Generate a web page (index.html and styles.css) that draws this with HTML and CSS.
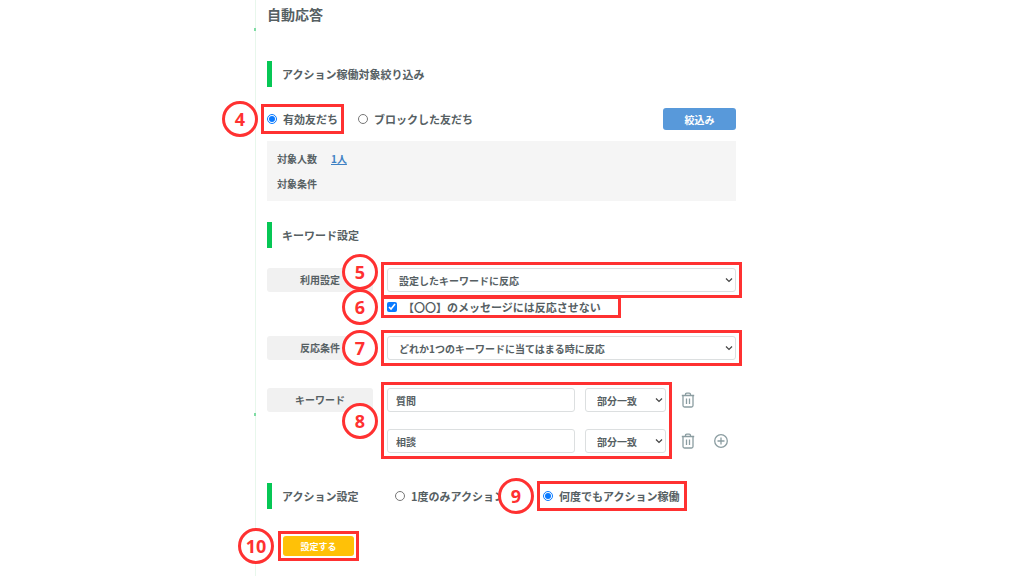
FILE: index.html
```html
<!DOCTYPE html>
<html lang="ja">

<head>
  <meta charset="UTF-8">
  <meta name="viewport" content="width=device-width, initial-scale=1.0">
  <title>自動応答</title>
  <link rel="stylesheet" href="styles.css">
</head>

<body>
  <main class="container">
    <h1 class="title">自動応答</h1>

    <form>
      <h2 class="section-title">アクション稼働対象絞り込み</h2>

      <div class="target-row">
        <div class="mark">
          <span class="badge">4</span>
          <label class="choice"><input type="radio" name="target" value="active" checked>有効友だち</label>
        </div>
        <label class="choice"><input type="radio" name="target" value="blocked">ブロックした友だち</label>
        <button type="button" class="button button-filter">絞込み</button>
      </div>

      <dl class="summary">
        <dt>対象人数</dt>
        <dd><a href="#">1人</a></dd>
        <dt>対象条件</dt>
        <dd></dd>
      </dl>

      <h2 class="section-title">キーワード設定</h2>

      <div class="row">
        <label for="usage" class="tag">利用設定</label>
        <div>
          <div class="mark">
            <span class="badge badge-high">5</span>
            <select id="usage" name="usage" class="input select">
              <option>設定したキーワードに反応</option>
            </select>
          </div>
          <div class="mark mark-check">
            <span class="badge">6</span>
            <label class="choice"><input type="checkbox" name="exclude" checked>【〇〇】のメッセージには反応させない</label>
          </div>
        </div>
      </div>

      <div class="row">
        <label for="condition" class="tag">反応条件</label>
        <div class="mark">
          <span class="badge">7</span>
          <select id="condition" name="condition" class="input select">
            <option>どれか1つのキーワードに当てはまる時に反応</option>
          </select>
        </div>
      </div>

      <div class="row row-keyword">
        <label for="keyword1" class="tag">キーワード</label>
        <div class="keywords">
          <div class="mark keyword-list">
            <span class="badge">8</span>
            <input type="text" id="keyword1" name="keyword1" class="input" value="質問">
            <select name="match1" class="input select" aria-label="一致条件1">
              <option>部分一致</option>
            </select>
            <input type="text" name="keyword2" class="input" value="相談" aria-label="キーワード2">
            <select name="match2" class="input select" aria-label="一致条件2">
              <option>部分一致</option>
            </select>
          </div>
          <div class="actions">
            <button type="button" class="icon-button" aria-label="削除">
              <svg viewBox="0 0 14 16"><path d="M.8 3.500h12.400M4.500 3.500V2.500q0-1.300 1.300-1.300h2.400q1.300 0 1.300 1.300v1M2 3.500v10q0 1.500 1.500 1.500h7q1.500 0 1.500-1.500v-10M5.500 6.500v5.500M8.500 6.500v5.500"/></svg>
            </button>
            <span></span>
            <button type="button" class="icon-button" aria-label="削除">
              <svg viewBox="0 0 14 16"><path d="M.8 3.500h12.400M4.500 3.500V2.500q0-1.300 1.300-1.300h2.400q1.300 0 1.300 1.300v1M2 3.500v10q0 1.500 1.500 1.500h7q1.500 0 1.500-1.500v-10M5.500 6.500v5.500M8.500 6.500v5.500"/></svg>
            </button>
            <button type="button" class="icon-button" aria-label="追加">
              <svg viewBox="0 0 14 16"><circle cx="7" cy="8" r="6.300"/><path d="M7 4.500v7M3.500 8h7"/></svg>
            </button>
          </div>
        </div>
      </div>

      <div class="row row-action">
        <h2 class="section-title">アクション設定</h2>
        <div class="action-choices">
          <label class="choice"><input type="radio" name="repeat" value="once">1度のみアクション</label>
          <div class="mark mark-repeat">
            <span class="badge">9</span>
            <label class="choice"><input type="radio" name="repeat" value="always" checked>何度でもアクション稼働</label>
          </div>
        </div>
      </div>

      <div class="mark mark-submit">
        <span class="badge">10</span>
        <button type="submit" class="button button-submit">設定する</button>
      </div>
    </form>
  </main>
</body>

</html>
```
FILE: styles.css
```css
* {
  box-sizing: border-box;
}

body {
  font-family: "Noto Sans CJK JP", sans-serif;
  font-size: 10px;
  font-weight: bold;
  color: #566063;
  background-color: #ffffff;
  margin: 0;
}

.container {
  position: relative;
  min-height: 100vh;
  margin: 0 288px 0 255px;
  padding: 4px 0 0 11px;
  border-left: 1px solid #e8f7ec;
}

/* サイドラインの目印 */
.container::before,
.container::after {
  content: "";
  position: absolute;
  left: -2px;
  width: 2px;
  height: 3px;
  background-color: #7fdca4;
}

.container::before {
  top: 28px;
}

.container::after {
  top: 413px;
}

.title {
  margin: 0;
  font-size: 14px;
  line-height: 20px;
}

.section-title {
  margin: 21px 0 20px;
  padding-left: 10px;
  border-left: 5px solid #06c755;
  font-size: 11px;
  line-height: 26px;
}

.title + form > .section-title:first-child {
  margin: 37px 0 21px;
}

.target-row {
  display: flex;
  align-items: center;
  gap: 20px;
  margin-bottom: 11px;
}

.choice {
  display: flex;
  align-items: center;
  gap: 6px;
  font-size: 11px;
  line-height: 18px;
  white-space: nowrap;
}

.choice input {
  width: 10px;
  height: 10px;
  margin: 0;
  accent-color: #0a7aff;
}

.button {
  border: none;
  border-radius: 3px;
  color: #ffffff;
  font: inherit;
  cursor: pointer;
}

.button-filter {
  width: 73px;
  height: 22px;
  margin-left: auto;
  background-color: #5899da;
}

.button-submit {
  display: block;
  width: 71px;
  height: 20px;
  padding: 0;
  background-color: #ffc107;
  font-size: 9px;
}

.summary {
  display: grid;
  grid-template-columns: max-content 1fr;
  column-gap: 14px;
  margin: 0;
  padding: 5px 10px;
  background-color: #f5f5f5;
  line-height: 25px;
}

.summary dd {
  margin: 0;
}

.summary a {
  color: #3f82c4;
}

.row {
  display: grid;
  grid-template-columns: 106px 1fr;
  column-gap: 14px;
  align-items: start;
  margin-bottom: 20px;
}

.tag {
  border-radius: 3px;
  background-color: #f1f1f1;
  line-height: 24px;
  text-align: center;
}

.input {
  display: block;
  width: 100%;
  height: 24px;
  padding: 0 8px;
  border: 1px solid #dcdfe0;
  border-radius: 3px;
  background-color: #ffffff;
  color: inherit;
  font: inherit;
}

.select {
  appearance: none;
  padding: 0 16px 0 11px;
  background-image: url("data:image/svg+xml,%3Csvg xmlns='http://www.w3.org/2000/svg' viewBox='0 0 8 8'%3E%3Cpath d='M1 2.500L4 5.500L7 2.500' fill='none' stroke='%23444' stroke-width='1.200'/%3E%3C/svg%3E");
  background-repeat: no-repeat;
  background-position: right 2px center;
  background-size: 8px 8px;
}

.row-keyword {
  margin: 28px 0 30px;
}

.keywords {
  display: flex;
  gap: 15px;
}

.keyword-list {
  flex: 1;
  display: grid;
  grid-template-columns: 1fr 81px;
  gap: 17px 10px;
}

.actions {
  display: grid;
  grid-template-columns: 14px 14px;
  grid-auto-rows: 24px;
  gap: 17px 19px;
  padding-right: 8px;
}

.icon-button {
  padding: 0;
  border: none;
  background: none;
  cursor: pointer;
}

.icon-button svg {
  display: block;
  width: 14px;
  height: 16px;
  margin: auto;
  fill: none;
  stroke: #8b9da1;
  stroke-width: 1.3;
}

.row-action {
  align-items: center;
  margin-bottom: 27px;
}

.row-action .section-title {
  margin: 0;
}

.action-choices {
  display: flex;
  gap: 38px;
  padding-left: 8px;
}

/* 手順の赤枠と番号 */
.mark {
  position: relative;
}

.mark::after {
  content: "";
  position: absolute;
  inset: -6px;
  border: 3px solid #ff3131;
  pointer-events: none;
}

.mark-check {
  width: 228px;
  margin-top: 6px;
}

.mark-check::after {
  inset: -2px -6px;
}

.mark-repeat {
  padding-right: 2px;
}

.mark-submit {
  width: max-content;
  margin-left: 16px;
}

.mark-submit::after {
  inset: -5px;
}

.badge {
  position: absolute;
  z-index: 1;
  top: 50%;
  right: calc(100% + 9px);
  width: 36px;
  height: 36px;
  margin-top: -18px;
  border: 3px solid #ff3131;
  border-radius: 50%;
  background-color: #ffffff;
  color: #ff3131;
  font-family: "Noto Sans", sans-serif;
  font-size: 18px;
  line-height: 30px;
  text-align: center;
}

.badge-high {
  margin-top: -26px;
}
```
